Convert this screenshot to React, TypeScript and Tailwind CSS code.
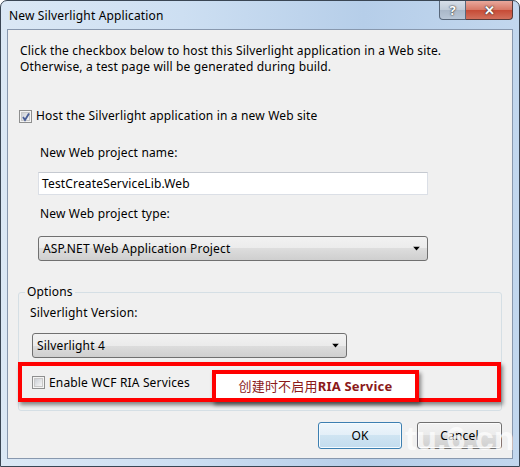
import React from "react";

const font = { fontFamily: '"Noto Sans", "Noto Sans CJK SC", sans-serif' };

function Combo({ text, className }: { text: string; className: string }) {
  return (
    <div
      className={
        "relative flex items-center rounded-[3px] border border-[#707070] bg-[linear-gradient(#f2f2f2_0%,#ebebeb_50%,#dddddd_50%,#cfcfcf_100%)] pl-[4px] text-[12px] text-black " +
        className
      }
    >
      <span>{text}</span>
      <svg className="absolute right-[6px] top-1/2 -translate-y-1/2" width="8" height="5" viewBox="0 0 8 5">
        <path d="M0 0H7L3.5 4Z" fill="#000" />
      </svg>
    </div>
  );
}

function CheckBox({ checked }: { checked?: boolean }) {
  return (
    <div className="relative h-[13px] w-[13px] shrink-0 border border-[#8e8f8f] bg-[#f4f4f4] p-[1px]">
      <div className="h-full w-full border border-[#c8c8c8] bg-[linear-gradient(135deg,#cbcfd5,#f6f6f6)]" />
      {checked && (
        <svg className="absolute left-[1px] top-[1px]" width="10" height="10" viewBox="0 0 10 10">
          <path d="M2 5 L4 8 L8 1.5" stroke="#4a5f97" strokeWidth="1.8" fill="none" />
        </svg>
      )}
    </div>
  );
}

export default function App() {
  return (
    <div
      className="relative h-[467px] w-[520px] overflow-hidden rounded-t-[7px] border border-[#3a4654] bg-[linear-gradient(90deg,#dbe8f5_0%,#cddff2_35%,#b6cee9_70%,#c2d7ee_100%)] text-black"
      style={font}
    >
      {/* Title bar */}
      <div className="flex h-[28px] items-start justify-between">
        <div className="pl-[8px] pt-[7px] text-[12px] leading-[16px] tracking-[0.15px] text-black">New Silverlight Application</div>
        <div className="mr-[6px] flex">
          <div className="flex h-[19px] w-[27px] items-center justify-center rounded-bl-[4px] border border-t-0 border-[#58677a] bg-[linear-gradient(#d6dee8_0%,#c0cbd8_50%,#a9b7c8_50%,#b8c6d6_100%)] text-[13px] font-bold leading-none text-white [text-shadow:0_0_2px_#333,0_0_1px_#333]">
            ?
          </div>
          <div className="flex h-[19px] w-[47px] items-center justify-center rounded-br-[4px] border border-l-0 border-t-0 border-[#5a3a38] bg-[linear-gradient(#e8a89c_0%,#d67765_50%,#c64a35_50%,#d2705c_100%)] text-[13px] font-bold leading-none text-white [text-shadow:0_0_2px_#333,0_0_1px_#333]">
            ✕
          </div>
        </div>
      </div>

      {/* Client area */}
      <div className="mx-[6px] h-[430px] border border-[#8898ae] bg-[#f0f0f0] text-[12px] leading-[16px] tracking-[0.16px]">
        <div className="pl-[12px] pt-[13px]">
          <div>Click the checkbox below to host this Silverlight application in a Web site.</div>
          <div>Otherwise, a test page will be generated during build.</div>
        </div>

        <div className="mt-[33px] flex items-center gap-[4px] pl-[11px]">
          <CheckBox checked />
          <span>Host the Silverlight application in a new Web site</span>
        </div>

        <div className="pl-[32px] pt-[21px]">New Web project name:</div>
        <div className="ml-[30px] mt-[11px] flex h-[23px] w-[390px] items-center border border-[#dbdfe6] border-t-[#c5c9d0] bg-white pl-[3px]">
          TestCreateServiceLib.Web
        </div>
        <div className="pl-[32px] pt-[11px]">New Web project type:</div>
        <Combo text="ASP.NET Web Application Project" className="ml-[30px] mt-[14px] h-[25px] w-[390px]" />

        {/* Options group */}
        <div className="relative ml-[10px] mt-[31px] h-[119px] w-[484px] rounded-[3px] border border-[#d5dfe5]">
          <div className="absolute -top-[9px] left-[6px] bg-[#f0f0f0] px-[2px]">Options</div>
          <div className="pl-[11px] pt-[12px]">Silverlight Version:</div>
          <Combo text="Silverlight 4" className="ml-[13px] mt-[12px] h-[25px] w-[315px]" />

          {/* Red annotation */}
          <div className="-ml-[1px] mt-[4px] flex h-[40px] w-[483px] border-[4px] border-[#ff0000] shadow-[2px_3px_4px_rgba(0,0,0,0.45)]">
            <div className="flex items-start gap-[4px] pl-[10px] pt-[10px]">
              <CheckBox />
              <span className="-mt-[1px]">Enable WCF RIA Services</span>
            </div>
            <div className="ml-[22px] mt-[4px] flex h-[32px] w-[207px] items-center justify-center border-[4px] border-[#ff0000] bg-white text-[13px] tracking-[0.2px] text-[#8b1a1a] shadow-[2px_3px_4px_rgba(0,0,0,0.45)]">
              创建时不启用<span className="font-bold">RIA Service</span>
            </div>
          </div>
        </div>

        {/* Buttons */}
        <div className="mt-[11px] flex gap-[15px] pl-[310px]">
          <div className="flex h-[27px] w-[84px] items-center justify-center rounded-[3px] border border-[#3c7fb1] bg-[linear-gradient(#eef6fb_0%,#e3eff8_50%,#cfe4f2_50%,#c3dcee_100%)] shadow-[inset_0_0_0_1px_#f4fbff]">
            OK
          </div>
          <div className="flex h-[27px] w-[85px] items-center justify-center rounded-[3px] border border-[#707070] bg-[linear-gradient(#f2f2f2_0%,#ebebeb_50%,#dddddd_50%,#cfcfcf_100%)] shadow-[inset_0_0_0_1px_#fbfbfb]">
            Cancel
          </div>
        </div>
      </div>

      {/* Watermark */}
      <div className="pointer-events-none absolute left-[404px] top-[420px] text-[34px] font-bold leading-none text-white/70" style={{ fontFamily: '"Liberation Sans", sans-serif' }}>
        tu.6.cn
      </div>
    </div>
  );
}
